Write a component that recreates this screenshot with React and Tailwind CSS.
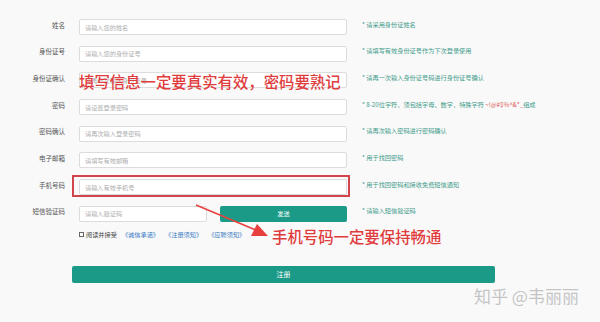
import React from "react";

// 注册表单字段
const FIELDS = [
  { label: "姓名", placeholder: "请输入您的姓名", hint: "请采用身份证姓名" },
  { label: "身份证号", placeholder: "请输入您的身份证号", hint: "请填写有效身份证号作为下次登录使用" },
  { label: "身份证确认", placeholder: "请再一次输入身份证号", hint: "请再一次输入身份证号码进行身份证号确认" },
  { label: "密码", placeholder: "请设置登录密码", hint: "password" },
  { label: "密码确认", placeholder: "请再次输入登录密码", hint: "请再次输入密码进行密码确认" },
  { label: "电子邮箱", placeholder: "请填写有效邮箱", hint: "用于找回密码" },
  { label: "手机号码", placeholder: "请输入有效手机号", hint: "用于找回密码和接收免费短信通知", marked: true },
];

function Hint({ text }) {
  if (text === "password") {
    return (
      <span>
        * 8-20位字符，须包括字母、数字，特殊字符 <span className="text-[#d9534f]">~!@#$%^&*_</span>组成
      </span>
    );
  }
  return <span>* {text}</span>;
}

function Row({ field }) {
  return (
    <div className="flex h-4 items-start">
      <div className="mt-[2.5px] w-[65px] shrink-0 text-right text-[6.5px] leading-none text-[#555]">{field.label}</div>
      <div className="relative ml-[14px] w-[268px] shrink-0">
        <input
          type="text"
          placeholder={field.placeholder}
          className="block h-4 w-full rounded-[2px] border border-[#dcdcdc] bg-white px-[5px] text-[6.2px] outline-none placeholder:text-[#aeaeae]"
        />
        {field.marked && <div className="absolute -left-[7px] -top-[4px] h-[22px] w-[278px] border-2 border-[#d2444c]" />}
      </div>
      <div className="ml-[15px] mt-[2.5px] whitespace-nowrap text-[6.2px] leading-none text-[#3f9b8b]">
        <Hint text={field.hint} />
      </div>
    </div>
  );
}

export default function App() {
  return (
    <div className="relative h-[322px] w-[600px] overflow-hidden bg-[#f9f9f9] font-['Noto_Sans_CJK_SC',sans-serif]">
      <div className="flex flex-col gap-[10.7px] pt-[19px]">
        {FIELDS.map((f) => (
          <Row key={f.label} field={f} />
        ))}

        {/* 短信验证码 */}
        <div className="flex h-4 items-start">
          <div className="mt-[2.5px] w-[65px] shrink-0 text-right text-[6.5px] leading-none text-[#555]">短信验证码</div>
          <input
            type="text"
            placeholder="请输入验证码"
            className="ml-[14px] block h-4 w-[128px] shrink-0 rounded-[2px] border border-[#dcdcdc] bg-white px-[5px] text-[6.2px] outline-none placeholder:text-[#aeaeae]"
          />
          <button className="ml-[13px] h-4 w-[127px] shrink-0 rounded-[2px] bg-[#1b9a87] text-[6.2px] text-white">发送</button>
          <div className="ml-[15px] mt-[2.5px] whitespace-nowrap text-[6.2px] leading-none text-[#3f9b8b]">* 请输入短信验证码</div>
        </div>
      </div>

      {/* 协议 */}
      <div className="ml-[79px] mt-[10px] flex items-center gap-[2px] text-[6.2px] leading-none">
        <span className="h-[5px] w-[5px] border border-[#666] bg-white" />
        <span className="text-[#444]">阅读并接受</span>
        <span className="ml-[3px] text-[#3b7cc4]">《诚信承诺》</span>
        <span className="ml-[4px] text-[#3b7cc4]">《注册须知》</span>
        <span className="ml-[4px] text-[#3b7cc4]">《应聘须知》</span>
      </div>

      <button className="ml-[72px] mt-[28px] block h-[17px] w-[423px] rounded-[2px] bg-[#1b9a87] text-[7px] text-white">注册</button>

      {/* 标注 */}
      <div className="absolute left-[79px] top-[74px] text-[15.4px] font-medium leading-none text-[#e03c3e]">填写信息一定要真实有效，密码要熟记</div>
      <div className="absolute left-[272px] top-[229px] text-[15.4px] font-medium leading-none text-[#e03c3e]">手机号码一定要保持畅通</div>
      <svg className="absolute left-0 top-0" width="600" height="322" viewBox="0 0 600 322">
        <line x1="196" y1="205" x2="258" y2="231" stroke="#e8403f" strokeWidth="1.6" />
        <polygon points="268,236 251,236 257,224" fill="#e8403f" />
      </svg>

      <div className="absolute left-[474px] top-[287px] whitespace-nowrap text-[17px] leading-none text-[#c4c4c4] [text-shadow:0_0_1px_#fff]">
        知乎 @韦丽丽
      </div>
    </div>
  );
}
